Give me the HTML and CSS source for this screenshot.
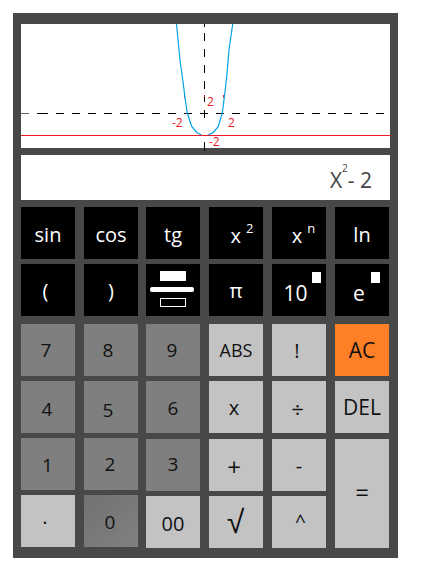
FILE: index.html
```html
<!DOCTYPE html>
<html lang="en">
<head>
    <meta charset="UTF-8">
    <meta name="viewport" content="width=device-width, initial-scale=1.0">
    <title>Calculator</title>
    <link rel="stylesheet" href="styles.css">
</head>
<body>
    <div class="calc">
        <div class="graph">
            <!-- viewBox starts at the graph's top left corner on the page: 21,24 -->
            <svg class="plot" width="371" height="127" viewBox="21 24 371 127">
                <path class="axis" d="M204.5 24V27M204.5 33V41M204.5 49V57M204.5 65V73M204.5 81V89M204.5 97V102M204.5 110V118M204.5 142V151"/>
                <path class="axis-start" d="M21 113.5H29"/>
                <path class="axis" d="M37 113.5H48M56 113.5H64M72 113.5H80M88 113.5H96M104 113.5H112M120 113.5H128M136 113.5H144M152 113.5H160M168 113.5H176M184 113.5H192M200 113.5H208M216 113.5H224M232 113.5H240M248 113.5H256M264 113.5H272M280 113.5H288M296 113.5H304M312 113.5H320M328 113.5H336M344 113.5H352M360 113.5H368M376 113.5H384"/>
                <path class="tick" d="M184.5 95V98M204.5 95V97M223.5 95V98"/>
                <path class="curve" d="M176.5 24L180 60L183.3 84L185.3 100L187.3 113L191.7 126.5L196.7 132.5L201.5 135M208 135L213.3 132.5L218.3 126.5L222.3 113L224 100L226.7 77L229 50L232.7 24"/>
                <path class="root-line" d="M21 135.5H391"/>
                <text class="num" x="207" y="106">2</text>
                <text class="num" x="172" y="127">-2</text>
                <text class="num" x="228" y="127">2</text>
                <text class="num" x="209" y="146">-2</text>
            </svg>
        </div>
        <div class="display"><span>X<sup>2</sup>- 2</span></div>
        <div class="keys">
            <button class="key dark fn">sin</button>
            <button class="key dark fn">cos</button>
            <button class="key dark fn">tg</button>
            <button class="key dark fn power k-square">x<sup>2</sup></button>
            <button class="key dark fn power k-pow">x<sup>n</sup></button>
            <button class="key dark fn">ln</button>

            <button class="key dark k-open">(</button>
            <button class="key dark">)</button>
            <button class="key dark frac">
                <span class="frac-top"></span>
                <span class="frac-bar"></span>
                <span class="frac-bottom"></span>
            </button>
            <button class="key dark">π</button>
            <button class="key dark exp k-ten">10<span class="box"></span></button>
            <button class="key dark exp k-e">e<span class="box"></span></button>

            <button class="key grey k7">7</button>
            <button class="key grey k8">8</button>
            <button class="key grey k9">9</button>
            <button class="key light small">ABS</button>
            <button class="key light k-fact">!</button>
            <button class="key orange word">AC</button>

            <button class="key grey k4">4</button>
            <button class="key grey k5">5</button>
            <button class="key grey k6">6</button>
            <button class="key light k-times">x</button>
            <button class="key light k-div">÷</button>
            <button class="key light word">DEL</button>

            <button class="key grey k1">1</button>
            <button class="key grey k2">2</button>
            <button class="key grey low k3">3</button>
            <button class="key light low k-plus">+</button>
            <button class="key light low">-</button>
            <button class="key light low equals">=</button>

            <button class="key light k-dot">.</button>
            <button class="key grey zero">0</button>
            <button class="key light low k00">00</button>
            <button class="key light low root">√</button>
            <button class="key light low k-caret">^</button>
        </div>
    </div>
</body>
</html>
```

FILE: styles.css
```css
body {
    margin: 0;
    background-color: #fff;
    font-family: "Open Sans", "Noto Sans", sans-serif;
}
.calc {
    width: 369px;
    height: 524px;
    margin: 13px 0 0 13px;
    padding: 11px 8px 10px;
    background-color: #484848;
}
.graph {
    height: 124px;
    background-color: #fff;
}
.plot {
    display: block;
    overflow: visible;
}
.plot path {
    fill: none;
}
.axis {
    stroke: #000;
    stroke-width: 1;
}
.axis-start {
    stroke: #666;
    stroke-width: 1;
}
.tick {
    stroke: #ed1c24;
    stroke-width: 1;
}
.curve {
    stroke: #00a2e8;
    stroke-width: 1.2;
}
.root-line {
    stroke: #ed1c24;
    stroke-width: 1;
}
.num {
    fill: #ed1c24;
    font-size: 12px;
}
.display {
    display: flex;
    justify-content: flex-end;
    align-items: center;
    box-sizing: border-box;
    height: 45px;
    margin-top: 7px;
    padding: 5px 18px 0 0;
    background-color: #fff;
    color: #444;
    font-size: 21px;
}
.display sup {
    font-size: 10px;
    line-height: 0;
    vertical-align: 16px;
}
.keys {
    display: grid;
    grid-template-columns: 63px 62px 63px 63px 63px 54px;
    grid-template-rows: 57px 60px 57px 57px 57px 53px;
    margin-top: 7px;
}
.key {
    display: flex;
    justify-content: center;
    align-items: center;
    width: 54px;
    height: 52px;
    padding: 0;
    border: none;
    font-family: inherit;
    font-size: 20px;
    cursor: pointer;
}
.dark {
    background-color: #000;
    color: #fff;
}
.grey {
    background-color: #7f7f7f;
    color: #111;
    font-size: 19px;
}
.zero {
    padding: 1px 2px 0 0;
    background: linear-gradient(135deg, #727272, #808080);
}
.light {
    background-color: #c3c3c3;
    color: #111;
}
.orange {
    background-color: #ff7f27;
    color: #111;
}
.small {
    font-size: 18px;
}
.word {
    font-size: 21px;
}
.low {
    margin-top: 1px;
}
.equals {
    grid-row: span 2;
    height: 109px;
    padding-bottom: 5px;
    font-size: 24px;
}
.root {
    padding-right: 1px;
    font-family: "Liberation Sans", sans-serif;
    font-size: 32px;
}

/* first row */
.fn {
    padding-top: 2px;
}
.power {
    padding-top: 4px;
}
.power sup {
    align-self: flex-start;
    margin: 11px 0 0 5px;
    font-size: 13px;
    line-height: 1;
}
.k-square {
    padding-left: 12px;
}
.k-pow {
    padding-left: 9px;
}

/* second row */
.exp {
    padding-top: 5px;
    font-size: 21px;
}
.box {
    align-self: flex-start;
    width: 9px;
    height: 11px;
    margin: 3px 0 0 4px;
    background-color: #fff;
}
.k-ten {
    padding-left: 6px;
}
.k-e {
    padding-left: 9px;
}
.k-e .box {
    margin-left: 6px;
}
.k-open {
    padding-right: 5px;
}
.frac {
    flex-direction: column;
    justify-content: flex-start;
    padding-top: 7px;
}
.frac-top {
    width: 26px;
    height: 10px;
    background-color: #fff;
}
.frac-bar {
    width: 44px;
    height: 5px;
    margin: 6px 2px 0 0;
    border-radius: 2px;
    background-color: #fff;
}
.frac-bottom {
    box-sizing: border-box;
    width: 26px;
    height: 9px;
    margin-top: 6px;
    border: 1px solid #fff;
}

/* the glyphs sit a little off centre on these keys */
.k7 { padding-right: 4px; }
.k8 { padding-right: 6px; }
.k9 { padding-right: 2px; }
.k4 { padding: 3px 2px 0 0; }
.k5 { padding: 6px 6px 0 0; }
.k6 { padding-top: 1px; }
.k1 { padding: 1px 1px 0 0; }
.k2 { padding: 0 2px 1px 0; }
.k3 { padding-bottom: 3px; }
.k00 { padding-top: 2px; }
.k-dot { padding: 0 6px 10px 0; }
.k-fact { padding-right: 4px; }
.k-times { padding-right: 4px; }
.k-div { padding: 4px 3px 0 0; font-size: 22px; }
.k-plus { padding: 2px 4px 0 0; font-size: 24px; }
.k-caret { padding: 0 0 3px 3px; font-size: 19px; }
```
